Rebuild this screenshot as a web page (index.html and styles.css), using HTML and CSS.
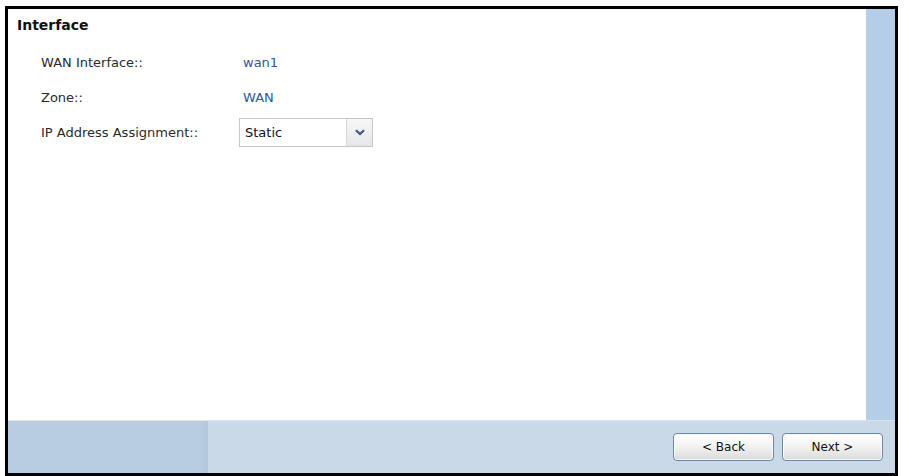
FILE: index.html
```html
<!DOCTYPE html>
<html>
<head>
<meta charset="utf-8">
<title>Interface</title>
<link rel="stylesheet" href="styles.css">
</head>
<body>
<div class="frame">
  <div class="main">
    <div class="content">
      <div class="title">Interface</div>
      <div class="rows">
        <div class="label">WAN Interface::</div>
        <div class="value"><span class="link">wan1</span></div>
        <div class="label">Zone::</div>
        <div class="value"><span class="link">WAN</span></div>
        <div class="label">IP Address Assignment::</div>
        <div class="value">
          <div class="select">
            <span class="select-text">Static</span>
            <span class="select-btn">
              <svg width="10" height="7" viewBox="0 0 10 7"><path d="M1 1.2 L5 5 L9 1.2" fill="none" stroke="#3e5680" stroke-width="2.2"/></svg>
            </span>
          </div>
        </div>
      </div>
    </div>
    <div class="strip"></div>
  </div>
  <div class="footer">
    <div class="footer-left"></div>
    <div class="footer-right">
      <button class="btn">&lt; Back</button>
      <button class="btn">Next &gt;</button>
    </div>
  </div>
</div>
</body>
</html>
```
FILE: styles.css
```css
html, body {
  margin: 0;
  padding: 0;
  background: #ffffff;
}
body {
  width: 904px;
  height: 476px;
  overflow: hidden;
  font-family: "DejaVu Sans", Verdana, sans-serif;
  font-size: 13px;
  color: #1a1a1a;
}
.frame {
  margin: 6px 0 0 5px;
  width: 893px;
  height: 470px;
  box-sizing: border-box;
  border: 3px solid #000;
  display: flex;
  flex-direction: column;
}
.main {
  flex: 1;
  display: flex;
  min-height: 0;
}
.content {
  flex: 1;
  padding: 8px 0 0 9px;
}
.strip {
  width: 29px;
  background: #b4cde9;
}
.title {
  font-weight: bold;
  font-size: 14px;
  line-height: 17px;
  color: #111;
}
.rows {
  margin-top: 11px;
  padding-left: 24px;
  display: grid;
  grid-template-columns: 198px auto;
  grid-auto-rows: 35px;
  align-items: center;
}
.label {
  line-height: 15px;
  color: #2a2a2a;
}
.value {
  line-height: 15px;
}
.link {
  padding-left: 4px;
  color: #2f55a0;
}
.select {
  width: 134px;
  height: 29px;
  box-sizing: border-box;
  border: 1px solid #c3c7cc;
  background: #fff;
  display: flex;
  align-items: stretch;
}
.select-text {
  flex: 1;
  padding-left: 5px;
  display: flex;
  align-items: center;
  color: #111;
}
.select-btn {
  width: 25px;
  border-left: 1px solid #d4d7db;
  background: linear-gradient(#f7f7f7, #e6e7e9);
  display: flex;
  align-items: center;
  justify-content: center;
}
.footer {
  height: 53px;
  display: flex;
  border-top: 1px solid #dbe5ef;
  box-sizing: border-box;
}
.footer-left {
  width: 200px;
  background: linear-gradient(to right, #b8cde2 96%, #b3c7dc);
}
.footer-right {
  flex: 1;
  background: #c9d9e7;
  display: flex;
  align-items: center;
  justify-content: flex-end;
  gap: 8px;
  padding-right: 12px;
}
.btn {
  width: 101px;
  height: 28px;
  box-sizing: border-box;
  border: 1px solid #6b86a6;
  border-radius: 4px;
  background: linear-gradient(#ffffff, #f3f3f3 45%, #e2e2e2 85%, #d6d6d6);
  box-shadow: inset 0 0 0 1px #fbfbfb;
  font-family: "DejaVu Sans", Verdana, sans-serif;
  font-size: 12px;
  color: #111;
  padding: 0;
}
```
